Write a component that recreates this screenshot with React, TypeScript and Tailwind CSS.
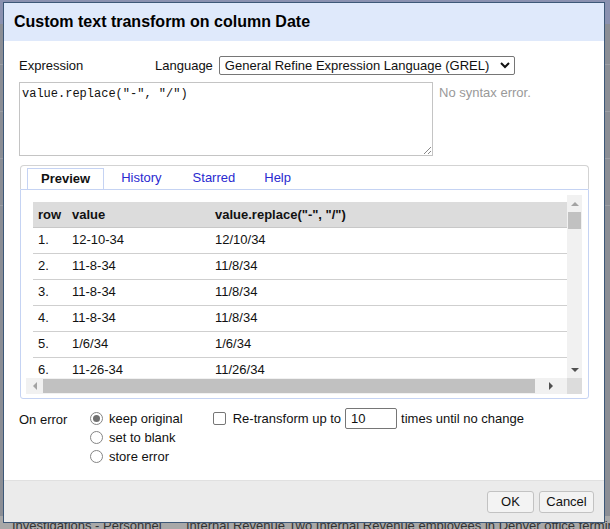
import type { ReactNode } from "react";

const rows = [
  ["1.", "12-10-34", "12/10/34"],
  ["2.", "11-8-34", "11/8/34"],
  ["3.", "11-8-34", "11/8/34"],
  ["4.", "11-8-34", "11/8/34"],
  ["5.", "1/6/34", "1/6/34"],
  ["6.", "11-26-34", "11/26/34"],
];

function Radio({ checked, children }: { checked?: boolean; children: ReactNode }) {
  return (
    <label className="flex h-[19px] items-center">
      <span className="ml-[1px] flex h-[13px] w-[13px] items-center justify-center rounded-full border border-[#858585] bg-white">
        {checked ? <span className="h-[7px] w-[7px] rounded-full bg-[#707070]" /> : null}
      </span>
      <span className="ml-[6px]">{children}</span>
    </label>
  );
}

function Arrow({ dir }: { dir: "up" | "down" | "left" | "right" }) {
  const pts = {
    up: "0,4 4,0 8,4",
    down: "0,0 8,0 4,4",
    left: "4,0 4,8 0,4",
    right: "0,0 4,4 0,8",
  }[dir];
  const size = dir === "up" || dir === "down" ? "h-[4px] w-[8px]" : "h-[8px] w-[4px]";
  return (
    <svg viewBox={dir === "up" || dir === "down" ? "0 0 8 4" : "0 0 4 8"} className={size}>
      <polygon points={pts} fill={dir === "up" || dir === "left" ? "#a3a3a3" : "#505050"} />
    </svg>
  );
}

function PreviewTable() {
  return (
    <div className="relative h-[199px] w-[556px] overflow-hidden bg-white">
      <div className="flex h-[183px] w-[556px] overflow-hidden">
        <div className="min-w-0 flex-1 overflow-hidden pl-[7px] pt-[7px]">
          <table className="w-[560px] border-collapse text-[13px] text-[#111]">
            <thead>
              <tr className="h-[25px] border-b border-[#c8c8c8] bg-[#dcdcdc] text-left font-bold">
                <th className="w-[39px] pl-[5px] font-bold">row</th>
                <th className="w-[143px] font-bold">value</th>
                <th className="font-bold">value.replace("-", "/")</th>
              </tr>
            </thead>
            <tbody>
              {rows.map((r) => (
                <tr key={r[0]} className="h-[26px] border-b border-[#cfcfcf]">
                  <td className="pl-[5px]">{r[0]}</td>
                  <td>{r[1]}</td>
                  <td>{r[2]}</td>
                </tr>
              ))}
            </tbody>
          </table>
        </div>
        <div className="flex h-[183px] w-[15px] shrink-0 flex-col items-center bg-[#f1f1f1]">
          <div className="flex h-[17px] items-center">
            <Arrow dir="up" />
          </div>
          <div className="h-[17px] w-[13px] bg-[#c1c1c1]" />
          <div className="flex-1" />
          <div className="flex h-[17px] items-center">
            <Arrow dir="down" />
          </div>
        </div>
      </div>
      <div className="flex h-[16px] items-center bg-[#f1f1f1]">
        <div className="flex w-[17px] justify-center">
          <Arrow dir="left" />
        </div>
        <div className="h-[14px] w-[492px] bg-[#c1c1c1]" />
        <div className="flex flex-1 justify-center">
          <Arrow dir="right" />
        </div>
        <div className="h-[16px] w-[15px] bg-[#dcdcdc]" />
      </div>
    </div>
  );
}

export default function App() {
  return (
    <div className="relative h-[529px] w-[610px] overflow-hidden bg-[#8b8e95] font-['Liberation_Sans',Arial,sans-serif] text-[13px] text-[#111]">
      <div className="h-[24px] bg-[#8a91b0]" />
      <div className="flex flex-col gap-[46px] pt-[40px]">
        <div className="h-px bg-[#9c9ea4]" />
        <div className="h-px bg-[#9c9ea4]" />
        <div className="h-px bg-[#9c9ea4]" />
        <div className="h-px bg-[#9c9ea4]" />
      </div>
      <div className="absolute bottom-[-6px] left-0 flex w-[640px] gap-[40px] whitespace-nowrap bg-[#a8a8a8] pl-[12px] text-[13px] text-[#333]">
        <span className="w-[134px]">Investigations - Personnel</span>
        <span>Internal Revenue Two Internal Revenue employees in Denver office terminated by HM</span>
      </div>

      <div className="absolute left-[3px] top-[2px] flex h-[521px] w-[602px] flex-col border border-[#3d5878] bg-white">
        <div className="flex h-[38px] items-center bg-[#dfe9fb] pl-[10px] text-[16px] font-bold text-black">
          Custom text transform on column Date
        </div>

        <div className="flex h-[439px] flex-col pl-[15px]">
          <div className="mt-[15px] flex h-[19px] items-center">
            <span className="w-[136px]">Expression</span>
            <span>Language</span>
            <div className="ml-[6px] flex h-[19px] w-[296px] items-center justify-between rounded-[2px] border border-[#767676] pl-[5px] pr-[4px]">
              <span>General Refine Expression Language (GREL)</span>
              <svg viewBox="0 0 10 7" className="h-[7px] w-[10px]">
                <polyline points="1,1 5,5 9,1" fill="none" stroke="#111" strokeWidth="2" />
              </svg>
            </div>
          </div>

          <div className="mt-[7px] flex items-start">
            <div className="relative h-[74px] w-[414px] border border-[#c4c4c4] pl-[2px] pt-[2px] font-['Liberation_Mono',monospace] text-[12px]">
              value.replace("-", "/")
              <svg viewBox="0 0 8 8" className="absolute bottom-[1px] right-[1px] h-[8px] w-[8px]">
                <line x1="1" y1="8" x2="8" y2="1" stroke="#888" strokeWidth="1" />
                <line x1="5" y1="8" x2="8" y2="5" stroke="#888" strokeWidth="1" />
              </svg>
            </div>
            <span className="ml-[6px] mt-[1px] text-[#999]">No syntax error.</span>
          </div>

          <div className="ml-[1px] mt-[9px] flex h-[234px] w-[569px] flex-col">
            <div className="flex h-[24px] items-end rounded-t-[4px] border-x border-t border-[#d3d3d3] pl-[6px]">
              <div className="-mb-px flex h-[22px] items-center border border-b-white border-[#c5d3f3] bg-white px-[13px] font-bold">Preview</div>
              <div className="ml-[2px] flex h-[22px] items-center px-[15px] text-[#2a2ad0]">History</div>
              <div className="ml-[1px] flex h-[22px] items-center px-[15px] text-[#2a2ad0]">Starred</div>
              <div className="flex h-[22px] items-center px-[14px] text-[#2a2ad0]">Help</div>
            </div>
            <div className="flex flex-1 rounded-b-[3px] border border-[#c5d3f3] pl-[5px] pt-[5px]">
              <PreviewTable />
            </div>
          </div>

          <div className="mt-[10px] flex">
            <span className="mt-[1px] w-[70px] leading-[19px]">On error</span>
            <div className="flex flex-col">
              <Radio checked>keep original</Radio>
              <Radio>set to blank</Radio>
              <Radio>store error</Radio>
            </div>
            <div className="ml-[30px] flex h-[19px] items-center">
              <span className="h-[13px] w-[13px] rounded-[2px] border border-[#767676] bg-white" />
              <span className="ml-[7px]">Re-transform up to</span>
              <div className="ml-[4px] flex h-[21px] w-[52px] items-center rounded-[2px] border border-[#767676] pl-[5px]">10</div>
              <span className="ml-[4px]">times until no change</span>
            </div>
          </div>
        </div>

        <div className="flex flex-1 items-start justify-end gap-[5px] border-t border-[#e0e0e0] bg-[#ebebeb] pr-[10px] pt-[10px]">
          <button type="button" className="h-[22px] w-[47px] rounded-[3px] border border-[#c2c2c2] bg-[#f3f3f3]">
            OK
          </button>
          <button type="button" className="h-[22px] w-[55px] rounded-[3px] border border-[#c2c2c2] bg-[#f3f3f3]">
            Cancel
          </button>
        </div>
      </div>
    </div>
  );
}
